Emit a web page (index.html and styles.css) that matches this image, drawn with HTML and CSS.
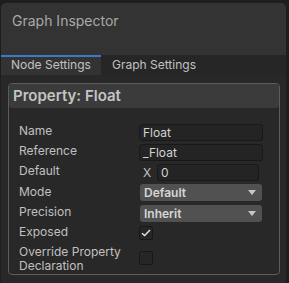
FILE: index.html
```html
<!DOCTYPE html>
<html>
<head>
<meta charset="utf-8">
<link rel="stylesheet" href="styles.css">
</head>
<body>
<div class="panel">
  <div class="header"><div class="title">Graph Inspector</div></div>
  <div class="tabs">
    <div class="tab active">Node Settings</div>
    <div class="tab">Graph Settings</div>
  </div>
  <div class="content">
    <div class="box">
      <div class="box-head">Property: Float</div>
      <div class="rows">
        <div class="row"><div class="label">Name</div><div class="field">Float</div></div>
        <div class="row"><div class="label">Reference</div><div class="field">_Float</div></div>
        <div class="row"><div class="label">Default</div><div class="vec"><span class="axis">X</span><div class="field num">0</div></div></div>
        <div class="row tall"><div class="label">Mode</div><div class="drop">Default<span class="arrow"></span></div></div>
        <div class="row"><div class="label">Precision</div><div class="drop">Inherit<span class="arrow"></span></div></div>
        <div class="row"><div class="label">Exposed</div><div class="check"><svg width="10" height="8" viewBox="0 0 10 8"><path d="M1 4.2 L3.6 6.6 L9 1" fill="none" stroke="#e6e6e6" stroke-width="1.4"/></svg></div></div>
        <div class="row double"><div class="label">Override Property<br>Declaration</div><div class="check"></div></div>
      </div>
    </div>
  </div>
</div>
</body>
</html>
```
FILE: styles.css
```css
html, body { margin: 0; padding: 0; }
body {
  background: #1e1e1e;
  font-family: Inter, "Noto Sans", sans-serif;
  width: 289px;
  height: 283px;
  overflow: hidden;
}
.panel {
  margin: 3px 0 0 1px;
  width: 285px;
  height: 280px;
  background: #282828;
  border-radius: 5px 5px 0 0;
  overflow: hidden;
}
.header {
  height: 52px;
  background: #333333;
  box-sizing: border-box;
  padding: 9px 0 0 11px;
}
.title {
  font-size: 14px;
  line-height: 17px;
  color: #a9a9a9;
}
.tabs {
  display: flex;
  height: 20px;
  background: #262626;
}
.tab {
  box-sizing: border-box;
  height: 20px;
  font-size: 12px;
  line-height: 16px;
  white-space: nowrap;
  color: #c2c2c2;
  border-top: 2px solid transparent;
  padding-left: 11px;
  padding-right: 11px;
}
.tab.active {
  width: 100px;
  padding-left: 10px;
  background: #333333;
  border-top-color: #3b7ac4;
}
.content {
  padding: 8px 0 0 7px;
}
.box {
  box-sizing: border-box;
  width: 272px;
  height: 192px;
  border: 1px solid #5c5c5c;
  border-radius: 4px;
}
.box-head {
  height: 24px;
  background: #3b3b3b;
  border-radius: 3px;
  box-sizing: border-box;
  padding: 3px 0 0 4px;
  font-size: 15px;
  font-weight: 600;
  line-height: 18px;
  color: #c4c4c4;
}
.rows {
  padding: 14px 0 0 10px;
}
.row {
  display: flex;
  align-items: center;
  height: 20px;
}
.row.tall { height: 21px; }
.row.double { height: 30px; align-items: center; }
.label {
  width: 120px;
  flex: none;
  font-size: 12px;
  line-height: 14px;
  white-space: nowrap;
  color: #c0c0c0;
  padding-bottom: 2px;
}
.double .label {
  padding-bottom: 0;
  padding-top: 2px;
}
.field {
  box-sizing: border-box;
  width: 124px;
  height: 17px;
  background: #242424;
  border: 1px solid #191919;
  border-radius: 3px;
  padding-left: 3px;
  font-size: 12px;
  line-height: 15px;
  color: #d2d2d2;
}
.vec {
  display: flex;
  align-items: center;
}
.axis {
  width: 18px;
  padding-left: 4px;
  box-sizing: border-box;
  font-size: 12px;
  color: #c0c0c0;
}
.field.num {
  width: 102px;
}
.drop {
  box-sizing: border-box;
  position: relative;
  width: 122px;
  height: 17px;
  margin-left: 1px;
  background: #515151;
  border-radius: 3px;
  padding-left: 4px;
  font-size: 12px;
  font-weight: 600;
  line-height: 17px;
  color: #d6d6d6;
}
.arrow {
  position: absolute;
  right: 6px;
  top: 6px;
  width: 0;
  height: 0;
  border-left: 4px solid transparent;
  border-right: 4px solid transparent;
  border-top: 5px solid #c8c8c8;
}
.check {
  box-sizing: border-box;
  width: 14px;
  height: 14px;
  background: #262626;
  border: 1px solid #181818;
  border-radius: 2px;
  display: flex;
  align-items: center;
  justify-content: center;
}
```
